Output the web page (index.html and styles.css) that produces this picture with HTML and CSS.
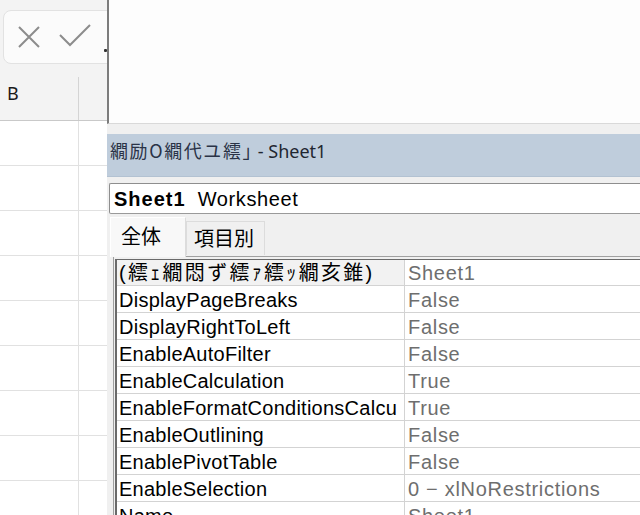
FILE: index.html
```html
<!DOCTYPE html>
<html lang="ja">
<head>
<meta charset="utf-8">
<title>Properties</title>
<link rel="stylesheet" href="styles.css">
</head>
<body>
<div class="screen">
  <div class="excel">
    <div class="fbar-area">
      <div class="fbar">
        <svg class="ico-x" width="24" height="24" viewBox="0 0 24 24"><path d="M2 2 L22 22 M22 2 L2 22" stroke="#8c8c8c" stroke-width="2" fill="none"/></svg>
        <svg class="ico-ok" width="32" height="24" viewBox="0 0 32 24"><path d="M1 11 L11 21 L31 1" stroke="#8c8c8c" stroke-width="2" fill="none"/></svg>
        <span class="fdot"></span>
      </div>
    </div>
    <div class="colhdr">
      <div class="hcell">B</div>
      <div class="hcell rest"></div>
    </div>
    <div class="cells">
      <div class="row"><div class="c"></div><div class="c rest"></div></div>
      <div class="row"><div class="c"></div><div class="c rest"></div></div>
      <div class="row"><div class="c"></div><div class="c rest"></div></div>
      <div class="row"><div class="c"></div><div class="c rest"></div></div>
      <div class="row"><div class="c"></div><div class="c rest"></div></div>
      <div class="row"><div class="c"></div><div class="c rest"></div></div>
      <div class="row"><div class="c"></div><div class="c rest"></div></div>
      <div class="row"><div class="c"></div><div class="c rest"></div></div>
      <div class="row"><div class="c"></div><div class="c rest"></div></div>
    </div>
  </div>
  <div class="vbe">
    <div class="codepane"></div>
    <div class="props">
      <div class="titlebar"><span class="tjp">繝励Ο繝代ユ繧｣</span> - Sheet1</div>
      <div class="combo"><b>Sheet1</b> Worksheet</div>
      <div class="tabs">
        <div class="tab active">全体</div>
        <div class="tab">項目別</div>
      </div>
      <div class="pgrid">
        <div class="prow sel"><div class="pname cjk">(繧ｪ繝悶ず繧ｧ繧ｯ繝亥錐)</div><div class="pval">Sheet1</div></div>
        <div class="prow"><div class="pname">DisplayPageBreaks</div><div class="pval">False</div></div>
        <div class="prow"><div class="pname">DisplayRightToLeft</div><div class="pval">False</div></div>
        <div class="prow"><div class="pname">EnableAutoFilter</div><div class="pval">False</div></div>
        <div class="prow"><div class="pname">EnableCalculation</div><div class="pval">True</div></div>
        <div class="prow"><div class="pname">EnableFormatConditionsCalcu</div><div class="pval">True</div></div>
        <div class="prow"><div class="pname">EnableOutlining</div><div class="pval">False</div></div>
        <div class="prow"><div class="pname">EnablePivotTable</div><div class="pval">False</div></div>
        <div class="prow"><div class="pname">EnableSelection</div><div class="pval">0 − xlNoRestrictions</div></div>
        <div class="prow"><div class="pname">Name</div><div class="pval">Sheet1</div></div>
      </div>
    </div>
  </div>
</div>
</body>
</html>
```

FILE: styles.css
```css
* { box-sizing: border-box; }
html, body { margin: 0; padding: 0; }
body {
  width: 640px;
  height: 515px;
  overflow: hidden;
  background: #f0f0f0;
  font-family: "Liberation Sans", Arial, sans-serif;
}
.screen {
  display: flex;
  width: 640px;
  height: 515px;
  overflow: hidden;
}

/* ---------- Excel side ---------- */
.excel {
  width: 107px;
  flex: none;
  background: #f3f3f3;
  overflow: hidden;
}
.fbar-area {
  height: 77px;
  padding: 10px 0 0 3px;
}
.fbar {
  width: 130px;
  height: 54px;
  border: 1px solid #e2e2e2;
  border-radius: 8px;
  background: #fbfbfb;
  display: flex;
  align-items: center;
  padding-left: 13px;
  position: relative;
}
.ico-x { margin-top: -1px; }
.ico-ok { margin-left: 18px; margin-top: -2px; }
.fdot {
  position: absolute;
  left: 100px;
  top: 38px;
  width: 3px;
  height: 3px;
  background: #333;
  border-radius: 1px;
}
.colhdr {
  display: flex;
  height: 44px;
  border-bottom: 1px solid #c9c9c9;
  background: #f3f3f3;
}
.hcell {
  width: 79px;
  border-right: 1px solid #d4d4d4;
  padding: 4px 0 0 7px;
  font-family: "Noto Sans", "Liberation Sans", sans-serif;
  font-size: 18px;
  color: #1a1a1a;
}
.hcell.rest { flex: 1; border-right: none; }
.cells { background: #fff; }
.row {
  display: flex;
  height: 45px;
  border-bottom: 1px solid #e1e1e1;
}
.c { width: 79px; border-right: 1px solid #e1e1e1; }
.c.rest { flex: 1; border-right: none; }

/* ---------- VBE side ---------- */
.vbe {
  flex: 1;
  display: flex;
  flex-direction: column;
  min-width: 0;
}
.codepane {
  height: 124px;
  flex: none;
  background: #fdfdfd;
  border-left: 2px solid #7c7c7c;
  border-bottom: 1px solid #d9d9d9;
}
.props {
  flex: 1;
  background: #f0f0f0;
  padding-top: 10px;
  display: flex;
  flex-direction: column;
}
.titlebar {
  height: 43px;
  background: #bfcddc;
  border-bottom: 1px solid #b3c2d2;
  padding-left: 3px;
  line-height: 33px;
  font-family: "Noto Sans", "Noto Sans CJK JP", sans-serif;
  font-size: 18px;
  color: #1f2630;
  white-space: nowrap;
}
.tjp {
  font-family: "Noto Sans CJK JP", sans-serif;
  letter-spacing: 1.6px;
  color: #2a3347;
}
.combo {
  margin: 6px 0 0 2px;
  height: 31px;
  background: #fff;
  border-top: 1px solid #8e8e8e;
  border-left: 1px solid #8e8e8e;
  border-bottom: 1px solid #9a9a9a;
  border-radius: 2px 0 0 2px;
  padding-left: 4px;
  line-height: 31px;
  font-size: 20px;
  letter-spacing: 0.6px;
  color: #000;
  white-space: nowrap;
}
.combo b { margin-right: 6px; letter-spacing: 1px; }
.tabs {
  height: 42px;
  display: flex;
  align-items: flex-end;
  padding-left: 3px;
}
.tab {
  font-family: "Noto Sans CJK JP", sans-serif;
  font-size: 20px;
  color: #000;
  height: 34px;
  line-height: 32px;
  padding: 0 9px 0 7px;
  width: 79px;
  background: #f0f0f0;
  border: 1px solid #dcdcdc;
  border-bottom: none;
  margin-bottom: 1px;
}
.tab.active {
  width: 76px;
  height: 40px;
  line-height: 36px;
  padding-left: 10px;
  background: #f8f8f8;
  border-color: #fff #dcdcdc #f8f8f8 #fff;
  margin-bottom: -1px;
  position: relative;
  z-index: 1;
}
.pgrid {
  flex: 1;
  margin-left: 6px;
  border-top: 1px solid #a0a0a0;
  border-left: 1px solid #a0a0a0;
  padding: 2px 0 0 2px;
  position: relative;
  background: #fff;
  box-shadow: inset 1px 1px 0 #f0f0f0, inset 2px 2px 0 #f0f0f0;
}
.pgrid::before {
  content: "";
  position: absolute;
  left: 1px; top: 2px; right: 0; bottom: 0;
  border-top: 1px solid #6a6a6a;
  border-left: 2px solid #6a6a6a;
  pointer-events: none;
}
.prow {
  display: flex;
  height: 27px;
  border-bottom: 1px solid #d3d3d3;
  line-height: 28px;
  font-size: 20px;
  letter-spacing: 0.25px;
  white-space: nowrap;
}
.pname {
  width: 289px;
  flex: none;
  padding-left: 3px;
  border-right: 1px solid #d3d3d3;
  color: #000;
  overflow: hidden;
}
.pname.cjk {
  font-family: "Liberation Sans", "Noto Sans CJK JP", sans-serif;
  font-size: 20px;
  letter-spacing: 2.3px;
}
.prow.sel .pname { background: #f2f2f2; }
.pval {
  flex: 1;
  padding-left: 3px;
  color: #6e6e6e;
  letter-spacing: 0.7px;
}
```
